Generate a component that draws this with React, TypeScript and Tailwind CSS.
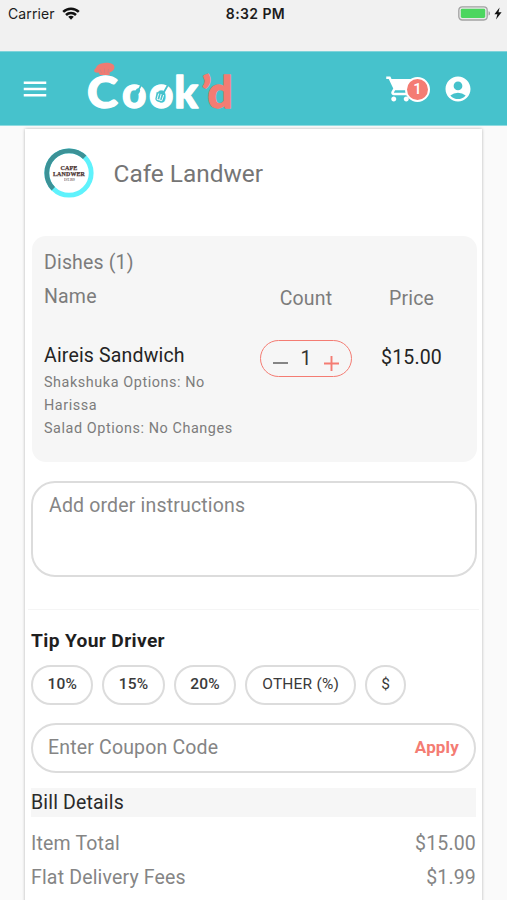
import React from 'react';
import { MdMenu, MdShoppingCart, MdAccountCircle } from 'react-icons/md';

function StatusBar() {
  return (
    <div className="flex h-[51px] items-start justify-between bg-[#f1f1f1] pl-2 pr-[5px] pt-[4px] font-['Inter','Liberation_Sans',sans-serif] text-[14px] leading-[19px] text-[#1c1c1c]">
      <div className="flex w-[200px] items-center gap-[7px]">
        <span className="tracking-[0.1px]">Carrier</span>
        <svg width="18" height="13" viewBox="0 0 18 13" fill="none" stroke="#111" strokeWidth="2.5">
          <path d="M1.2 4.8C5.5 0.6 12.5 0.6 16.8 4.8" />
          <path d="M4 8C6.8 5.2 11.2 5.2 14 8" />
          <path d="M6.2 9.8C7.8 8.4 10.2 8.4 11.8 9.8L9 12.7Z" fill="#111" stroke="none" />
        </svg>
      </div>
      <span className="pl-px font-semibold tracking-[0.4px]">8:32 PM</span>
      <div className="flex h-[19px] w-[200px] items-center justify-end gap-[3px]">
        <svg width="33" height="15" viewBox="0 0 33 15">
          <rect x="0.8" y="0.8" width="28.4" height="13.2" rx="3.4" fill="#e9e9e9" stroke="#a3a3a3" strokeWidth="1.3" />
          <rect x="2.8" y="2.8" width="24.4" height="9.2" rx="1.4" fill="#4cd65f" />
          <path d="M30.6 5.2C32.4 5.8 32.4 9 30.6 9.6Z" fill="#999" />
        </svg>
        <svg width="8" height="13" viewBox="0 0 8 13">
          <path d="M5.6 0.5L0.4 7.2H3.4L2 12.4L7.6 5.3H4.5Z" fill="#111" />
        </svg>
      </div>
    </div>
  );
}

function Logo() {
  return (
    <svg width="154" height="66" viewBox="84 55 154 66" fontFamily="Lato, sans-serif" fontWeight="900" strokeLinejoin="round">
      <g fill="#fff" stroke="#fff" strokeWidth="1.3" fontSize="43.5">
        <text x="87" y="106.5" textLength="31" lengthAdjust="spacingAndGlyphs">C</text>
        <text x="122" y="106.5" textLength="24.6" lengthAdjust="spacingAndGlyphs">o</text>
        <text x="149" y="106.5" textLength="24.6" lengthAdjust="spacingAndGlyphs">o</text>
        <text x="174.2" y="106.5" textLength="24" lengthAdjust="spacingAndGlyphs">k</text>
      </g>
      <text x="201.5 207.5" y="106.5" fill="#f47c73" stroke="#f47c73" strokeWidth="1.3" fontSize="44">’d</text>
      <path d="M100 74L98.5 71.6C94 72.5 92.8 69 96 67C97 63.7 101 62.2 104 62C108 61 114 62.4 114.2 65.3C115 68 113 70.5 109.5 71.4L109.8 74Z" fill="#ef7b72" />
      <path d="M100 68.5L101.5 72M104.5 67.5V72M108.5 68L108 72" stroke="#c9847f" strokeWidth="0.7" />
      <path d="M134 97L141.5 83.5" stroke="#46c2cc" strokeWidth="1.6" />
      <ellipse cx="137.6" cy="90.4" rx="2.2" ry="3.2" fill="#46c2cc" transform="rotate(28 137.6 90.4)" />
      <path d="M162.6 93.5L168.5 83" stroke="#46c2cc" strokeWidth="1.8" />
      <path d="M156.7 91L155.3 98C155.8 101.3 161.8 102.2 163.3 99.4L165 93" fill="#46c2cc" />
      <path d="M158.7 92.5L157 98.3L161.8 99.7L163.7 94M161.2 93L159.6 98.8" fill="none" stroke="#fff" strokeWidth="0.9" />
    </svg>
  );
}

function Header() {
  return (
    <header className="flex h-[75px] items-center border-y border-t-[#7fd3da] border-b-[#8fdbe0] bg-[#46c2cc] pl-5 text-white">
      <MdMenu size={30} />
      <div className="ml-[34px]"><Logo /></div>
      <div className="relative ml-[147px]">
        <MdShoppingCart size={30} />
        <span className="absolute left-[20px] top-[3px] flex size-[25px] items-center justify-center rounded-full border-2 border-white bg-[#f47c73] text-[15px] font-medium leading-none">1</span>
      </div>
      <MdAccountCircle size={30} className="ml-[28px]" />
    </header>
  );
}

function Restaurant() {
  return (
    <div className="flex h-[107px] items-start pl-[19px] pt-[19px]">
      <svg width="50" height="50" viewBox="0 0 50 50">
        <circle cx="25" cy="25" r="22.2" fill="#fff" stroke="#5ff2fc" strokeWidth="4.8" />
        <path d="M9.3 40.7A22.2 22.2 0 0 1 40.7 9.3" fill="none" stroke="#3c9297" strokeWidth="4.8" />
        <g fill="#4b3330" fontFamily="Liberation Serif, serif" fontWeight="700" textAnchor="middle" stroke="#4b3330" strokeWidth="0.25">
          <text x="25" y="21.6" fontSize="5.8" textLength="17" lengthAdjust="spacingAndGlyphs">CAFE</text>
          <text x="25" y="27.6" fontSize="5.8" textLength="32" lengthAdjust="spacingAndGlyphs">LANDWER</text>
          <text x="25.5" y="32.6" fontSize="3" textLength="11" strokeWidth="0" opacity="0.7">EST. 1919</text>
        </g>
      </svg>
      <h1 className="ml-[19.5px] mt-[11px] text-[24.4px] leading-[30px] tracking-normal text-[#757575]">Cafe Landwer</h1>
    </div>
  );
}

function Dishes() {
  return (
    <section className="ml-[7px] flex h-[226px] w-[445px] rounded-[14px] bg-[#f6f6f6] text-[#7c7c7c]">
      <div className="w-[229px] pl-3 pt-[14px]">
        <p className="h-[34px] leading-[25px]">Dishes (1)</p>
        <p className="h-[59px] leading-[25px]">Name</p>
        <p className="leading-[25px] text-[#242424]">Aireis Sandwich</p>
        <p className="mt-[3px] w-[195px] text-[14.4px] leading-[23.2px] tracking-[0.57px]">
          Shakshuka Options: No<br />Harissa<br />Salad Options: No Changes
        </p>
      </div>
      <div className="flex w-[90px] flex-col items-center pt-[50px]">
        <p className="leading-[25px]">Count</p>
        <div className="mt-[29px] flex h-[37px] w-[92px] shrink-0 items-center justify-between rounded-full border-[1.5px] border-[#f47c73] px-[12px]">
          <span className="mt-[9px] h-[2px] w-[15px] bg-[#858585]" />
          <span className="leading-[25px] text-[#333]">1</span>
          <svg className="mt-[9px]" width="15" height="15" viewBox="0 0 15 15" stroke="#f47c73" strokeWidth="1.9">
            <path d="M0 7.5H15M7.5 0V15" />
          </svg>
        </div>
      </div>
      <div className="flex w-[121px] flex-col items-center pt-[50px]">
        <p className="leading-[25px]">Price</p>
        <p className="mt-[34px] leading-[25px] text-[#242424]">$15.00</p>
      </div>
    </section>
  );
}

function Tips() {
  return (
    <div className="mt-[12px] flex h-[40px] gap-[9px] text-[15.5px] tracking-[0.2px] text-[#3a3a3a]">
      <button className="w-[62.4px] rounded-full border-2 border-[#dcdcdc] font-medium">10%</button>
      <button className="w-[62.4px] rounded-full border-2 border-[#dcdcdc] font-medium">15%</button>
      <button className="w-[62.4px] rounded-full border-2 border-[#dcdcdc] font-medium">20%</button>
      <button className="w-[111px] rounded-full border-2 border-[#dcdcdc]">OTHER (%)</button>
      <button className="w-[41px] rounded-full border-2 border-[#dcdcdc]">$</button>
    </div>
  );
}

function BillRow({ label, value }: { label: string; value: string }) {
  return (
    <div className="flex h-[34px] items-center justify-between">
      <span>{label}</span>
      <span>{value}</span>
    </div>
  );
}

export default function App() {
  return (
    <div className="h-[900px] w-[507px] overflow-hidden bg-[#fafafa] font-['Roboto','Liberation_Sans',sans-serif] text-[19.5px] tracking-[0.17px]">
      <StatusBar />
      <Header />
      <main className="ml-[25px] mt-[3px] h-[800px] w-[457px] bg-white shadow-[0_0_3px_rgba(0,0,0,0.28)]">
        <Restaurant />
        <Dishes />
        <div className="ml-[6px] mt-[19px] h-[96px] w-[446px] rounded-[24px] border-2 border-[#dcdcdc] px-4 pt-[10px] leading-[25px] text-[#858585]">
          Add order instructions
        </div>
        <hr className="mx-[3px] mt-[32px] border-[#f5f5f5]" />
        <section className="ml-[6px] w-[445px] pt-[18px]">
          <h2 className="text-[19.2px] font-bold leading-[25px] tracking-[0.35px] text-[#1f1f1f]">Tip Your Driver</h2>
          <Tips />
          <div className="mt-[18px] flex h-[50px] items-center justify-between rounded-full border-2 border-[#dcdcdc] px-[15px]">
            <span className="text-[#858585]">Enter Coupon Code</span>
            <button className="text-[17px] font-bold text-[#f47c73]">Apply</button>
          </div>
          <h3 className="mt-[15px] h-[29px] bg-[#f6f6f6] leading-[29px] text-[#2a2a2a]">Bill Details</h3>
          <div className="mt-[10px] text-[#858585]">
            <BillRow label="Item Total" value="$15.00" />
            <BillRow label="Flat Delivery Fees" value="$1.99" />
          </div>
        </section>
      </main>
    </div>
  );
}
